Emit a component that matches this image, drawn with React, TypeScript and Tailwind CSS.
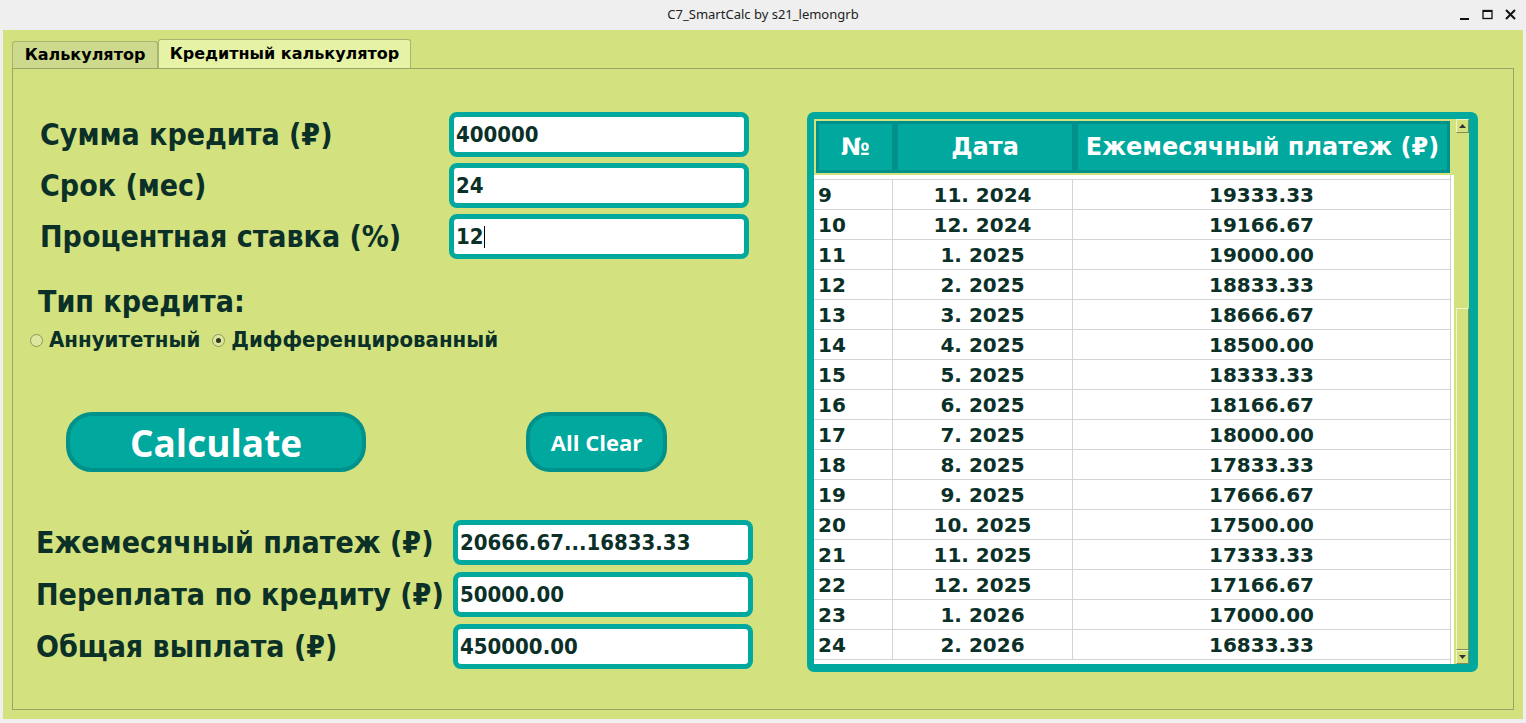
import React from 'react'

const rows = [
  ['9', '11. 2024', '19333.33'],
  ['10', '12. 2024', '19166.67'],
  ['11', '1. 2025', '19000.00'],
  ['12', '2. 2025', '18833.33'],
  ['13', '3. 2025', '18666.67'],
  ['14', '4. 2025', '18500.00'],
  ['15', '5. 2025', '18333.33'],
  ['16', '6. 2025', '18166.67'],
  ['17', '7. 2025', '18000.00'],
  ['18', '8. 2025', '17833.33'],
  ['19', '9. 2025', '17666.67'],
  ['20', '10. 2025', '17500.00'],
  ['21', '11. 2025', '17333.33'],
  ['22', '12. 2025', '17166.67'],
  ['23', '1. 2026', '17000.00'],
  ['24', '2. 2026', '16833.33'],
]

const cond = "font-['DejaVu_Sans_Condensed','DejaVu_Sans',sans-serif] font-stretch-condensed font-bold text-[#0b3028]"

function Field({ value, caret }: { value: string; caret?: boolean }) {
  return (
    <div className="w-[300px] h-[45px] rounded-[8px] border-[5px] border-[#00a89e] bg-white flex items-center pl-[2px]">
      <span className={`${cond} text-[22px] leading-none`}>{value}</span>
      {caret && <span className="w-px h-[22px] bg-black" />}
    </div>
  )
}

function Radio({ checked, label }: { checked?: boolean; label: string }) {
  return (
    <div className="flex items-center gap-[6px]">
      <span className="w-[13px] h-[13px] rounded-full border border-[#8d9a5a] bg-[#dde7a0] flex items-center justify-center">
        {checked && <span className="w-[5px] h-[5px] rounded-full bg-[#2b3a1a]" />}
      </span>
      <span className={`${cond} text-[22px] leading-none`}>{label}</span>
    </div>
  )
}

export default function App() {
  return (
    <div className="w-[1526px] h-[723px] bg-[#efefef] flex flex-col overflow-hidden">
      {/* title bar */}
      <div className="h-[30px] relative flex items-center justify-center">
        <span className="font-['Noto_Sans',sans-serif] text-[13px] text-[#222]">C7_SmartCalc by s21_lemongrb</span>
        <div className="absolute right-[10px] top-[9px] flex items-center gap-[12px]">
          <svg width="11" height="12" viewBox="0 0 11 12"><rect x="1" y="9" width="9" height="2" fill="#111" /></svg>
          <svg width="11" height="12" viewBox="0 0 11 12"><rect x="1" y="1.5" width="9" height="8" fill="none" stroke="#111" strokeWidth="1.3" /><rect x="1" y="1" width="9" height="2" fill="#111" /></svg>
          <svg width="11" height="12" viewBox="0 0 11 12"><path d="M1 1 L10 10 M10 1 L1 10" stroke="#111" strokeWidth="2" /></svg>
        </div>
      </div>

      {/* window body */}
      <div className="mx-[3px] mb-[4px] flex-1 bg-[#d3e17f] flex flex-col px-[9px] pt-[9px] pb-[9px]">
        <div className="flex items-end h-[29px]">
          <div className="w-[146px] h-[27px] bg-[#cdd98c] border border-b-0 border-[#a9b470] rounded-t-[3px] flex items-center justify-center font-['DejaVu_Sans',sans-serif] font-bold text-[16px] text-black">
            Калькулятор
          </div>
          <div className="w-[253px] h-[29px] bg-[#e6f2a6] border border-b-0 border-[#a9b470] rounded-t-[3px] flex items-center justify-center font-['DejaVu_Sans',sans-serif] font-bold text-[16px] text-black">
            Кредитный калькулятор
          </div>
        </div>
        <div className="flex-1 border border-[#9aa468] flex pt-[43px] pl-[17px]">
          {/* left column */}
          <div className="w-[777px] flex flex-col">
            <div className="flex flex-col gap-[6px]">
              {[
                ['Сумма кредита (₽)', '400000', false],
                ['Срок (мес)', '24', false],
                ['Процентная ставка (%)', '12', true],
              ].map(([l, v, c]) => (
                <div key={l as string} className="flex items-center">
                  <span className={`${cond} text-[30px] leading-none w-[419px] pl-[10px]`}>{l}</span>
                  <Field value={v as string} caret={c as boolean} />
                </div>
              ))}
            </div>
            <div className={`${cond} text-[30px] leading-none mt-[28px] pl-[8px]`}>Тип кредита:</div>
            <div className="flex items-center gap-[12px] mt-[12px]">
              <Radio label="Аннуитетный" />
              <Radio label="Дифференцированный" checked />
            </div>
            <div className="flex items-center mt-[61px] pl-[36px]">
              <button className="w-[300px] h-[60px] rounded-[26px] border-[4px] border-[#00928a] bg-[#00a89e] text-white font-['Open_Sans',sans-serif] font-bold text-[37px] leading-none">
                Calculate
              </button>
              <button className="ml-[160px] w-[141px] h-[60px] rounded-[24px] border-[4px] border-[#00928a] bg-[#00a89e] text-white font-['Open_Sans',sans-serif] font-bold text-[22px] leading-none">
                All Clear
              </button>
            </div>
            <div className="flex flex-col gap-[7px] mt-[48px]">
              {[
                ['Ежемесячный платеж (₽)', '20666.67...16833.33'],
                ['Переплата по кредиту (₽)', '50000.00'],
                ['Общая выплата (₽)', '450000.00'],
              ].map(([l, v]) => (
                <div key={l} className="flex items-center">
                  <span className={`${cond} text-[30px] leading-none w-[423px] pl-[6px] whitespace-nowrap`}>{l}</span>
                  <Field value={v} />
                </div>
              ))}
            </div>
          </div>

          {/* table */}
          <div className="w-[671px] h-[560px] rounded-[7px] bg-[#00a89e] p-[7px] pr-[9px] pb-[8px] flex">
            <div className="flex-1 flex flex-col bg-white">
              <div className="bg-[#d3e17f] p-[2px] pr-[0px] flex h-[56px]">
                <div className="w-[79px] border-[3px] border-[#00928a] bg-[#00a89e] text-white flex items-center justify-center font-['DejaVu_Sans',sans-serif] font-bold text-[24px]">№</div>
                <div className="w-[180px] border-[3px] border-[#00928a] bg-[#00a89e] text-white flex items-center justify-center font-['DejaVu_Sans',sans-serif] font-bold text-[24px]">Дата</div>
                <div className="w-[375px] border-[3px] border-[#00928a] bg-[#00a89e] text-white flex items-center justify-center font-['DejaVu_Sans',sans-serif] font-bold text-[24px]">Ежемесячный платеж (₽)</div>
              </div>
              <div className="flex-1 pt-[4px] w-[637px] border-r border-[#cfcfcf]">
                {rows.map(r => (
                  <div key={r[0]} className="h-[30px] flex border-t border-[#d4d4d4] font-['DejaVu_Sans',sans-serif] font-bold text-[20px] text-[#0b3028] leading-none">
                    <div className="w-[79px] border-r border-[#d4d4d4] flex items-center pl-[4px]">{r[0]}</div>
                    <div className="w-[180px] border-r border-[#d4d4d4] flex items-center justify-center">{r[1]}</div>
                    <div className="flex-1 flex items-center justify-center">{r[2]}</div>
                  </div>
                ))}
                <div className="border-t border-[#d4d4d4]" />
              </div>
            </div>
            {/* scrollbar */}
            <div className="w-[15px] bg-[#d3e17f] flex flex-col pl-[2px]">
              <div className="h-[14px] border border-[#7f8a55] border-t-[#f0f7c8] border-l-[#f0f7c8] flex items-center justify-center">
                <svg width="7" height="4" viewBox="0 0 7 4"><path d="M0 4 L3.5 0 L7 4 Z" fill="#333" /></svg>
              </div>
              <div className="h-[175px]" />
              <div className="flex-1 border border-[#7f8a55] border-t-[#f0f7c8] border-l-[#f0f7c8] bg-[#d3e17f]" />
              <div className="h-[14px] border border-[#7f8a55] border-t-[#f0f7c8] border-l-[#f0f7c8] flex items-center justify-center">
                <svg width="7" height="4" viewBox="0 0 7 4"><path d="M0 0 L3.5 4 L7 0 Z" fill="#333" /></svg>
              </div>
            </div>
          </div>
        </div>
      </div>
    </div>
  )
}
